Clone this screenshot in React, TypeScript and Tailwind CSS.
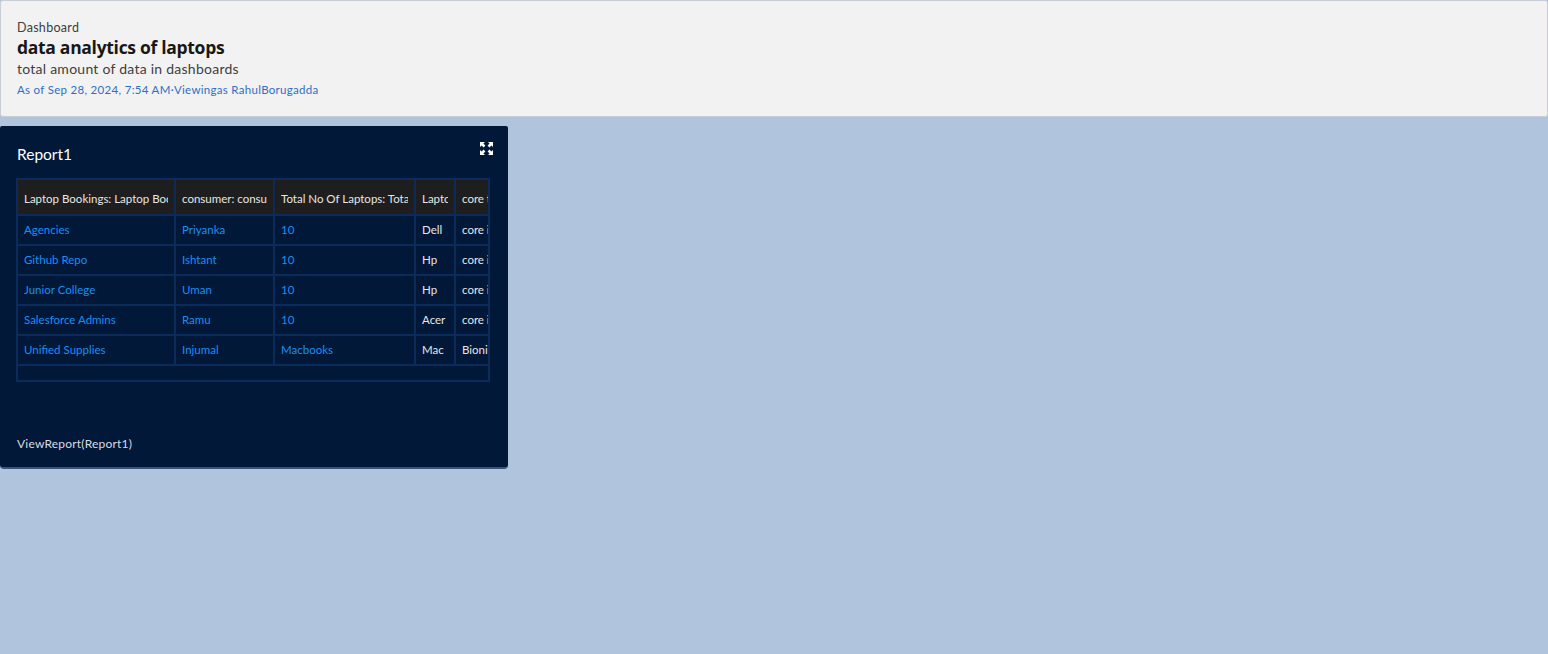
import React from 'react';

const rows = [
  { org: 'Agencies', consumer: 'Priyanka', total: '10', brand: 'Dell', core: 'core i5' },
  { org: 'Github Repo', consumer: 'Ishtant', total: '10', brand: 'Hp', core: 'core i7' },
  { org: 'Junior College', consumer: 'Uman', total: '10', brand: 'Hp', core: 'core i3' },
  { org: 'Salesforce Admins', consumer: 'Ramu', total: '10', brand: 'Acer', core: 'core i5' },
  { org: 'Unified Supplies', consumer: 'Injumal', total: 'Macbooks', brand: 'Mac', core: 'Bionic' },
];

const headers = [
  'Laptop Bookings: Laptop Bookings Name',
  'consumer: consumer Name',
  'Total No Of Laptops: Total',
  'Laptop Brand',
  'core type',
];

function ExpandIcon() {
  return (
    <svg width="13" height="13" viewBox="0 0 13 13" fill="white">
      <path d="M0 0h5L3.4 1.6 5.4 3.6 3.6 5.4 1.6 3.4 0 5z" />
      <path d="M13 0v5L11.4 3.4 9.4 5.4 7.6 3.6 9.6 1.6 8 0z" />
      <path d="M0 13V8l1.6 1.6 2-2 1.8 1.8-2 2L5 13z" />
      <path d="M13 13H8l1.6-1.6-2-2 1.8-1.8 2 2L13 8z" />
    </svg>
  );
}

function Clip({ children }: { children: React.ReactNode }) {
  return <div className="overflow-hidden whitespace-nowrap">{children}</div>;
}

export default function App() {
  const cell = 'border-2 border-[#0b2c5a] px-[6px]';
  return (
    <div className="min-h-screen bg-[#b0c4de] font-['Lato',sans-serif]" style={{ minHeight: 654 }}>
      {/* Header */}
      <div className="bg-[#f2f2f2] border border-[#c9ced6] rounded-[3px] h-[117px] px-4 pt-[19px]">
        <div className="text-[12.5px] leading-[16px] text-[#3e3e3c] tracking-[0.3px]">Dashboard</div>
        <h1 className="text-[17.5px] leading-[22px] font-bold text-[#181818] font-['Open_Sans',sans-serif] tracking-[-0.3px]">data analytics of laptops</h1>
        <p className="text-[14px] leading-[22px] text-[#3e3e3c] tracking-[0.25px]">total amount of data in dashboards</p>
        <p className="text-[11.5px] leading-[20px] text-[#2e6fc4] tracking-[0.3px]">As of Sep 28, 2024, 7:54 AM·Viewingas RahulBorugadda</p>
      </div>

      {/* Report card */}
      <div className="mt-[9px] w-[508px] h-[343px] bg-[#011839] rounded-b-[4px] rounded-t-[2px] border-b-2 border-[#3b557a] px-4 pt-[18px] flex flex-col">
        <div className="flex items-start justify-between">
          <h2 className="pl-px text-[15.5px] leading-[20px] text-white">Report1</h2>
          <div className="mt-[-2px] mr-[-1px]">
            <ExpandIcon />
          </div>
        </div>

        <div className="mt-[14px] w-[474px] overflow-hidden border-r-2 border-[#0b2c5a]">
          <table className="table-fixed border-collapse text-[11.5px] w-[520px]">
            <colgroup>
              <col className="w-[158px]" />
              <col className="w-[99px]" />
              <col className="w-[141px]" />
              <col className="w-[40px]" />
              <col className="w-[82px]" />
            </colgroup>
            <thead>
              <tr className="h-[36px] bg-[#1e1e1e]">
                {headers.map((h) => (
                  <th key={h} className={`${cell} pt-[3px] text-left font-normal text-[#e6e6e6]`}>
                    <Clip>{h}</Clip>
                  </th>
                ))}
              </tr>
            </thead>
            <tbody>
              {rows.map((r) => (
                <tr key={r.org} className="h-[30px]">
                  <td className={`${cell} text-[#1b8ef2]`}><Clip>{r.org}</Clip></td>
                  <td className={`${cell} text-[#1b8ef2]`}><Clip>{r.consumer}</Clip></td>
                  <td className={`${cell} text-[#1b8ef2]`}><Clip>{r.total}</Clip></td>
                  <td className={`${cell} text-[#e6e6e6]`}><Clip>{r.brand}</Clip></td>
                  <td className={`${cell} text-[#e6e6e6]`}><Clip>{r.core}</Clip></td>
                </tr>
              ))}
              <tr className="h-[16px]">
                <td colSpan={5} className="border-2 border-[#0b2c5a]" />
              </tr>
            </tbody>
          </table>
        </div>

        <div className="mt-auto mb-[15px] pl-px text-[12px] leading-[16px] text-[#d8dde6] tracking-[0.2px]">
          ViewReport(Report1)
        </div>
      </div>
    </div>
  );
}
